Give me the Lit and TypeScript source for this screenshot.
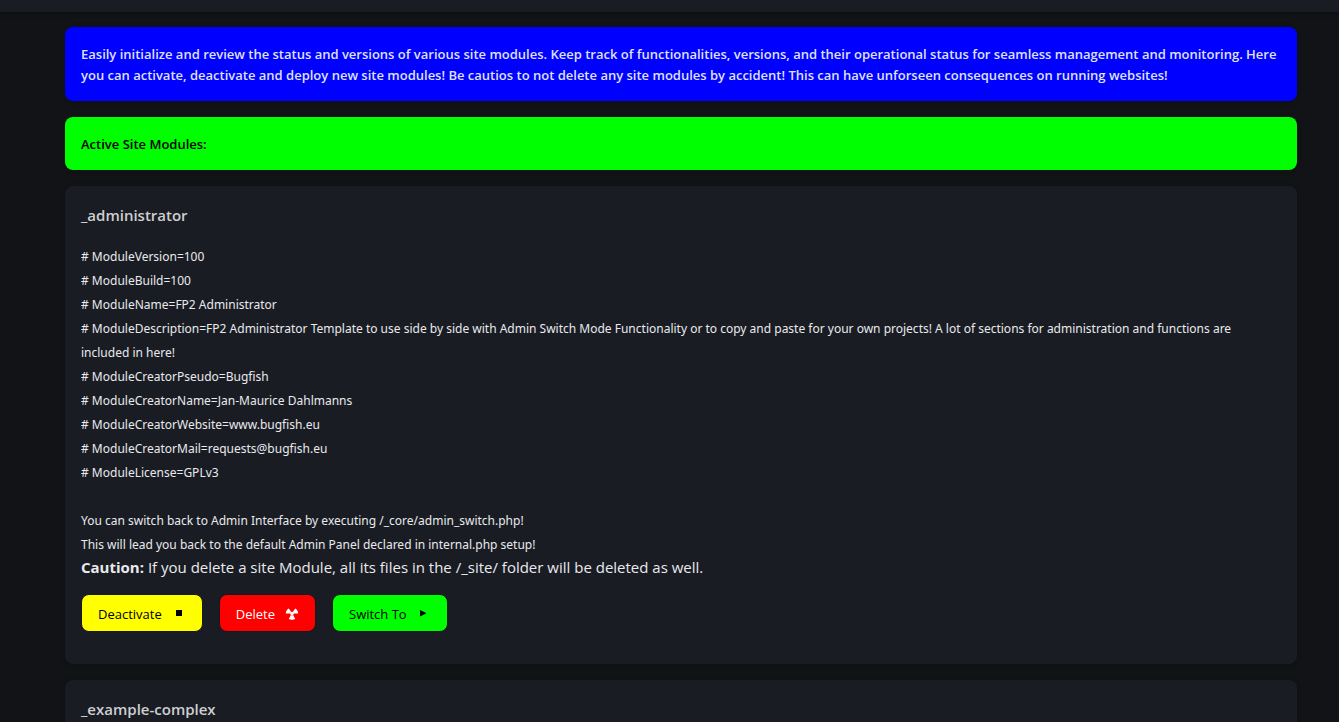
import { LitElement, html, css, svg } from "lit";
import { customElement } from "lit/decorators.js";

const details = [
  "# ModuleVersion=100",
  "# ModuleBuild=100",
  "# ModuleName=FP2 Administrator",
  "# ModuleDescription=FP2 Administrator Template to use side by side with Admin Switch Mode Functionality or to copy and paste for your own projects! A lot of sections for administration and functions are included in here!",
  "# ModuleCreatorPseudo=Bugfish",
  "# ModuleCreatorName=Jan-Maurice Dahlmanns",
  "# ModuleCreatorWebsite=www.bugfish.eu",
  "# ModuleCreatorMail=requests@bugfish.eu",
  "# ModuleLicense=GPLv3",
  "",
  "You can switch back to Admin Interface by executing /_core/admin_switch.php!",
  "This will lead you back to the default Admin Panel declared in internal.php setup!",
];

const stopIcon = svg`<rect x="4" y="2" width="6" height="6" />`;
const playIcon = svg`<path d="M3 2L9 5L9 5.4L3 8.4Z" />`;
// Three blades around a small hub: two above, one below.
const radiationIcon = svg`
  <path d="M3.8 .6C2 1.5 .9 3.2 .8 5.6H5.4C5.4 4.9 5.6 4.4 6.2 4Z" />
  <path d="M10.2 .6C12 1.5 13.1 3.2 13.2 5.6H8.6C8.6 4.9 8.4 4.4 7.8 4Z" />
  <path d="M5.9 7L3.8 11C5.7 12 8.3 12 10.2 11L8.1 7C7.4 7.3 6.6 7.3 5.9 7Z" />
  <circle cx="7" cy="5.6" r="1.8" />`;

@customElement("app-root")
export class AppRoot extends LitElement {
  static styles = css`
    :host {
      display: block;
      height: 100vh;
      overflow: hidden;
      background: #121317;
      color: #e9eaec;
      font-family: "Segoe UI", "Open Sans", "Noto Sans", sans-serif;
    }
    .topbar {
      height: 12px;
      background: #1a1c24;
      box-shadow: 0 1px 4px rgba(0, 0, 0, 0.35);
    }
    .content {
      display: flex;
      flex-direction: column;
      gap: 16px;
      padding: 15px 42px 0 65px;
    }
    .box {
      padding: 16px;
      border-radius: 8px;
      box-shadow: 0 1px 4px rgba(0, 0, 0, 0.25);
    }
    .notice {
      margin: 0;
      padding: 17px 16px 15px;
      font-size: 13px;
      font-weight: 600;
      line-height: 21px;
    }
    .info {
      background: #0000ff;
      color: #dfe0f5;
    }
    .active {
      background: #00ff00;
      color: #000;
    }
    .card {
      background: #1a1c24;
      padding-bottom: 32px;
    }
    .title {
      margin: 0 0 17px;
      font-size: 15px;
      font-weight: 600;
      line-height: 26px;
      color: #cecfd1;
    }
    .line {
      min-height: 24px;
      font-family: "Segoe UI", "Noto Sans", sans-serif;
      font-size: 12px;
      line-height: 24px;
    }
    .caution {
      margin: 0 0 17px;
      font-size: 15px;
      line-height: 20px;
    }
    .actions {
      display: flex;
      flex-wrap: wrap;
      gap: 16px;
    }
    .btn {
      display: flex;
      align-items: center;
      gap: 10px;
      height: 38px;
      padding: 2px 16px 0;
      border: 1px solid #15171c;
      border-radius: 8px;
      font: 13px/21px "Segoe UI", "Open Sans", "Noto Sans", sans-serif;
      color: #000;
      cursor: pointer;
    }
    .stop {
      background: #ffff00;
    }
    .delete {
      background: #ff0000;
      color: #fff;
    }
    .switch {
      background: #00ff00;
    }
    .icon {
      width: 14px;
      height: 13px;
      fill: currentColor;
    }
  `;

  private button(kind: string, label: string, icon: unknown) {
    return html`<button type="button" class="btn ${kind}">
      ${label}<svg class="icon" viewBox="0 0 14 13" aria-hidden="true">${icon}</svg>
    </button>`;
  }

  render() {
    return html`
      <header class="topbar"></header>
      <main class="content">
        <p class="box notice info">
          Easily initialize and review the status and versions of various site modules. Keep track of
          functionalities, versions, and their operational status for seamless management and monitoring. Here
          you can activate, deactivate and deploy new site modules! Be cautios to not delete any site modules by
          accident! This can have unforseen consequences on running websites!
        </p>
        <p class="box notice active">Active Site Modules:</p>
        <section class="box card">
          <h4 class="title">_administrator</h4>
          ${details.map((text) => html`<div class="line">${text}</div>`)}
          <p class="caution">
            <b>Caution:</b> If you delete a site Module, all its files in the /_site/ folder will be deleted as
            well.
          </p>
          <div class="actions">
            ${this.button("stop", "Deactivate", stopIcon)}
            ${this.button("delete", "Delete", radiationIcon)}
            ${this.button("switch", "Switch To", playIcon)}
          </div>
        </section>
        <section class="box card">
          <h4 class="title">_example-complex</h4>
        </section>
      </main>
    `;
  }
}
